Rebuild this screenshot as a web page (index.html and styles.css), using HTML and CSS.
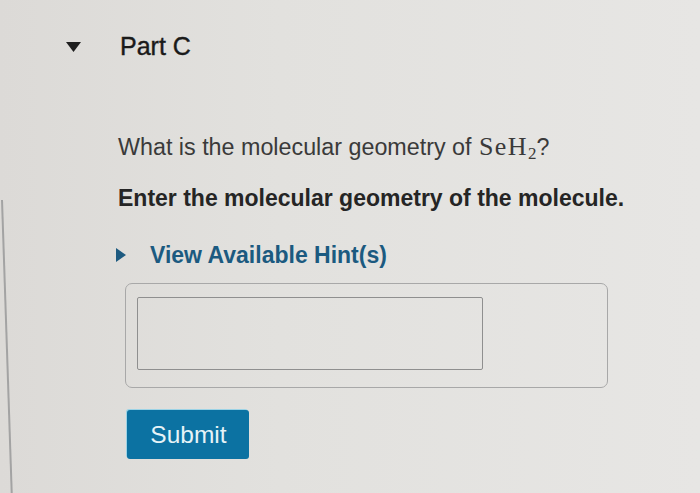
FILE: index.html
```html
<!DOCTYPE html>
<html lang="en">
<head>
<meta charset="utf-8">
<title>Part C</title>
<link rel="stylesheet" href="styles.css">
</head>
<body>
<div class="page">
  <div class="part-header">
    <svg class="caret-down" width="15" height="10" viewBox="0 0 15 10"><path d="M0 0 H15 L7.5 10 Z" fill="#1e1e1e"/></svg>
    <h2 class="part-title">Part C</h2>
  </div>
  <div class="part-body">
    <p class="question">What is the molecular geometry of <span class="formula">SeH<sub class="sub">2</sub></span>?</p>
    <p class="instruction">Enter the molecular geometry of the molecule.</p>
    <div class="hint-row">
      <svg class="caret-right" width="10" height="14" viewBox="0 0 10 14"><path d="M0 0 L10 7 L0 14 Z" fill="#1d5a80"/></svg>
      <span class="hint-link">View Available Hint(s)</span>
    </div>
    <div class="answer-box">
      <div class="answer-input"></div>
    </div>
    <button class="submit-btn" type="button">Submit</button>
  </div>
</div>
</body>
</html>
```
FILE: styles.css
```css
html, body {
  margin: 0;
  padding: 0;
}
body {
  width: 700px;
  height: 493px;
  overflow: hidden;
  background: linear-gradient(90deg, #dcdad7 0%, #e2e1de 40%, #e7e6e4 100%);
  font-family: "Liberation Sans", Arial, sans-serif;
  color: #2a2a2a;
  position: relative;
}
body::before {
  content: "";
  position: absolute;
  left: 1px;
  top: 200px;
  width: 1.5px;
  height: 300px;
  background: #a3a3a3;
  transform: rotate(-1.9deg);
  transform-origin: top left;
}
.page {
  padding-top: 31px;
}
.part-header {
  display: flex;
  align-items: center;
  height: 30px;
  padding-left: 66px;
}
.caret-down {
  display: block;
  margin-top: 1px;
}
.part-title {
  margin: 0 0 0 39px;
  font-size: 25px;
  line-height: 30px;
  font-weight: normal;
  color: #1a1a1a;
  -webkit-text-stroke: 0.4px #1a1a1a;
}
.part-body {
  padding-left: 118px;
  display: flex;
  flex-direction: column;
  align-items: flex-start;
}
.question {
  margin: 72px 0 0 0;
  font-size: 23.3px;
  line-height: 28px;
  color: #3a3a3a;
}
.formula {
  font-family: "Liberation Serif", "DejaVu Serif", serif;
  font-size: 26px;
  letter-spacing: 1.4px;
  line-height: 0;
  margin-left: 1px;
}
.sub {
  font-size: 17px;
  line-height: 0;
  letter-spacing: 0;
  vertical-align: -4px;
}
.instruction {
  margin: 23px 0 0 0;
  font-size: 23px;
  line-height: 28px;
  font-weight: bold;
  color: #252525;
}
.hint-row {
  margin: 29px 0 0 -2px;
  display: flex;
  align-items: center;
  height: 28px;
}
.caret-right {
  display: block;
  margin-top: -1px;
}
.hint-link {
  margin-left: 24px;
  font-size: 23px;
  line-height: 28px;
  font-weight: bold;
  color: #1b5a80;
}
.answer-box {
  margin: 14px 0 0 7px;
  width: 470px;
  padding: 13px 0 17px 11px;
  border: 1px solid #a8a8a8;
  border-radius: 7px;
}
.answer-input {
  width: 344px;
  height: 71px;
  border: 1px solid #8f8f8f;
  border-radius: 2px;
}
.submit-btn {
  margin: 22px 0 0 9px;
  width: 122px;
  height: 49px;
  border: none;
  border-radius: 3px;
  background: #0c72a2;
  box-shadow: -1px -1px 0 #9cd3e6;
  color: #e6f3f7;
  font-family: "Liberation Sans", Arial, sans-serif;
  font-size: 24.5px;
  padding: 0 0 0 1px;
  cursor: pointer;
}
```
